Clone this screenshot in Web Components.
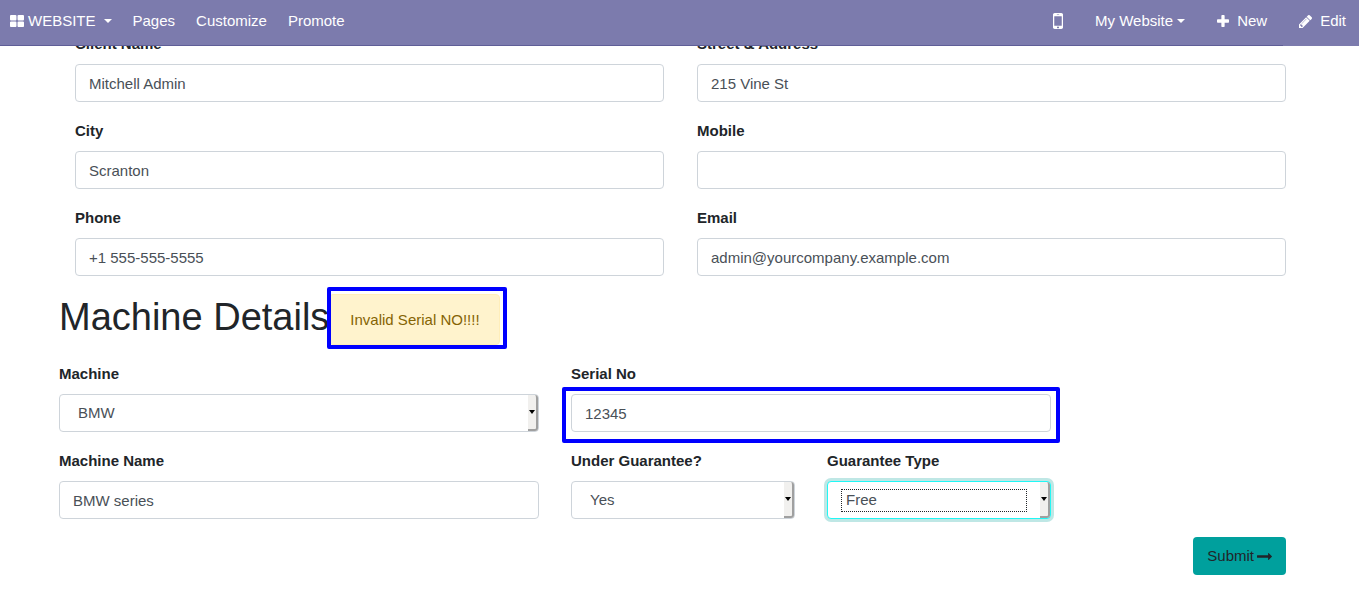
<!DOCTYPE html>
<html lang="en">
<head>
<meta charset="utf-8">
<meta name="viewport" content="width=device-width, initial-scale=1">
<title>Machine Repair Request</title>
<style>
  body { margin: 0; background: #fff; color: #212529; font: 15px/22px "Liberation Sans", Arial, sans-serif; }
</style>
</head>
<body>
<editor-bar></editor-bar>
<repair-form></repair-form>

<script>
const ICONS = {
  grid: ['64 128 1664 1408', 14, 12, 'M832 1024v384q0 52-38 90t-90 38h-512q-52 0-90-38t-38-90v-384q0-52 38-90t90-38h512q52 0 90 38t38 90zm0-768v384q0 52-38 90t-90 38h-512q-52 0-90-38t-38-90v-384q0-52 38-90t90-38h512q52 0 90 38t38 90zm896 768v384q0 52-38 90t-90 38h-512q-52 0-90-38t-38-90v-384q0-52 38-90t90-38h512q52 0 90 38t38 90zm0-768v384q0 52-38 90t-90 38h-512q-52 0-90-38t-38-90v-384q0-52 38-90t90-38h512q52 0 90 38t38 90z'],
  mobile: ['512 256 768 1280', 10, 16, 'M976 1408q0-33-23.5-56.5t-56.5-23.5-56.5 23.5-23.5 56.5 23.5 56.5 56.5 23.5 56.5-23.5 23.5-56.5zm208-160v-704q0-13-9.500-22.500t-22.500-9.500h-512q-13 0-22.500 9.500t-9.500 22.500v704q0 13 9.500 22.500t22.500 9.500h512q13 0 22.500-9.500t9.500-22.500zm-192-848q0-16-16-16h-160q-16 0-16 16t16 16h160q16 0 16-16zm288-16v1024q0 52-38 90t-90 38h-512q-52 0-90-38t-38-90v-1024q0-52 38-90t90-38h512q52 0 90 38t38 90z'],
  plus: ['192 128 1408 1408', 12, 12, 'M1600 736v192q0 40-28 68t-68 28h-416v416q0 40-28 68t-68 28h-192q-40 0-68-28t-28-68v-416h-416q-40 0-68-28t-28-68v-192q0-40 28-68t68-28h416v-416q0-40 28-68t68-28h192q40 0 68 28t28 68v416h416q40 0 68 28t28 68z'],
  pencil: ['128 149 1515 1515', 13, 13, 'M491 1536l91-91-235-235-91 91v107h128v128h107zm523-928q0-22-22-22-10 0-17 7l-542 542q-7 7-7 17 0 22 22 22 10 0 17-7l542-542q7-7 7-17zm-54-192l416 416-832 832h-416v-416zm683 96q0 53-37 90l-166 166-416-416 166-165q36-38 90-38 53 0 91 38l235 234q37 39 37 91z'],
  arrow: ['0 512 1728 768', 15, 7, 'M1728 893q0 14-10 24l-384 354q-16 14-35 6-19-9-19-29v-224h-1248q-14 0-23-9t-9-23v-192q0-14 9-23t23-9h1248v-224q0-21 19-29t35 5l384 350q10 10 10 23z'],
  caret: ['0 0 8 4', 8, 4, 'M0 0h8l-4 4z']
};

class UiIcon extends HTMLElement {
  connectedCallback() {
    const [box, w, h, d] = ICONS[this.getAttribute('name')];
    this.attachShadow({ mode: 'open' }).innerHTML = `
      <style>
        :host { display: inline-flex; flex: none; }
        svg { display: block; fill: currentColor; }
      </style>
      <svg viewBox="${box}" width="${w}" height="${h}" preserveAspectRatio="none" aria-hidden="true"><path d="${d}"/></svg>`;
  }
}
customElements.define('ui-icon', UiIcon);

class EditorBar extends HTMLElement {
  constructor() {
    super();
    this.attachShadow({ mode: 'open' }).innerHTML = `
      <style>
        :host { display: block; position: fixed; inset: 0 0 auto 0; z-index: 10; }
        nav {
          display: flex; justify-content: space-between; align-items: center;
          padding: 10px 13px 14px 10px; color: #fff;
          background: linear-gradient(#5f5e97, #5f5e97) 0 100% / calc(100% - 76px) 1px no-repeat, #7c7bad;
        }
        div { display: flex; align-items: center; gap: 21px; }
        .tools { gap: 32px; }
        a { display: flex; align-items: center; gap: 8px; color: inherit; text-decoration: none; white-space: nowrap; }
        .tight { gap: 4px; }
        span { display: flex; align-items: center; gap: 4px; }
      </style>
      <nav aria-label="Website editor">
        <div>
          <a href="#website"><span><ui-icon name="grid"></ui-icon>WEBSITE</span><ui-icon name="caret"></ui-icon></a>
          <a href="#pages">Pages</a>
          <a href="#customize">Customize</a>
          <a href="#promote">Promote</a>
        </div>
        <div class="tools">
          <a href="#mobile" aria-label="Mobile preview"><ui-icon name="mobile"></ui-icon></a>
          <a href="#sites" class="tight">My Website<ui-icon name="caret"></ui-icon></a>
          <a href="#new"><ui-icon name="plus"></ui-icon>New</a>
          <a href="#edit"><ui-icon name="pencil"></ui-icon>Edit</a>
        </div>
      </nav>`;
  }
}
customElements.define('editor-bar', EditorBar);

/* Labelled control: a text box, or a drop-down when "options" is given. */
class FormField extends HTMLElement {
  connectedCallback() {
    const value = this.getAttribute('value') || '';
    const options = this.getAttribute('options');
    const control = options
      ? `<select id="control">${options.split('|').map(o => `<option${o === value ? ' selected' : ''}>${o}</option>`).join('')}</select>
         <i class="strip"><ui-icon name="caret"></ui-icon></i>`
      : `<input id="control" type="${this.getAttribute('type') || 'text'}" value="${value}">`;
    this.attachShadow({ mode: 'open' }).innerHTML = `
      <style>
        :host { display: block; min-width: 0; }
        label { display: block; width: fit-content; margin-bottom: 9px; font-weight: bold; }
        .box { position: relative; }
        input, select {
          display: block; box-sizing: border-box; width: 100%; height: 38px; margin: 0; padding: 0 13px;
          font: inherit; color: #495057; background: #fff; border: 1px solid #ced4da; border-radius: 4px;
          appearance: none; outline: 0;
        }
        select { padding: 0 24px 0 18px; }
        .strip {
          position: absolute; inset: 1px 1px 1px auto; width: 10px; box-sizing: border-box; pointer-events: none;
          display: flex; align-items: center; justify-content: center; color: #000; background: #f1f0ee;
          border: solid #a0a0a0; border-width: 0 2px 2px 0; border-radius: 0 3px 3px 0;
        }
        .strip ui-icon { width: 6px; overflow: hidden; justify-content: center; }
        :host([active]) select { border-color: #21f7f5; box-shadow: 0 0 0 3px #bfe7e5; }
        :host([active]) .box::after {
          content: ""; position: absolute; inset: 8px 24px 7px 14px; border: 1px dotted #212529; pointer-events: none;
        }
        :host([marked]) .box::before {
          content: ""; position: absolute; inset: -7px -9px -11px; border: 4px solid #00f; border-radius: 2px; pointer-events: none;
        }
      </style>
      <label for="control">${this.getAttribute('label')}</label>
      <div class="box">${control}</div>`;
  }
}
customElements.define('form-field', FormField);

class AlertNote extends HTMLElement {
  constructor() {
    super();
    this.attachShadow({ mode: 'open' }).innerHTML = `
      <style>
        :host {
          display: block; position: relative; padding: 14px 19px 13px 20px; white-space: nowrap;
          color: #856404; background: #fff3cd; border: 1px solid #ffeeba; border-radius: 4px;
        }
        :host::after {
          content: ""; position: absolute; inset: -8px -8px -5px -3px; border: 4px solid #00f; border-radius: 2px; pointer-events: none;
        }
      </style>
      <slot></slot>`;
  }
}
customElements.define('alert-note', AlertNote);

class RepairForm extends HTMLElement {
  constructor() {
    super();
    this.attachShadow({ mode: 'open' }).innerHTML = `
      <style>
        :host { display: block; padding: 33px 52px 18px 59px; }
        form { display: grid; gap: 18px; }
        .client { display: grid; grid-template-columns: 1fr 1fr; gap: 18px 33px; padding: 0 21px 0 16px; }
        .title { display: flex; align-items: flex-start; }
        h1 { margin: 0; font-size: 38px; line-height: 46px; font-weight: normal; white-space: nowrap; }
        .machine { display: grid; grid-template-columns: repeat(5, 1fr); gap: 18px 32px; }
        .wide { grid-column: span 2; }
        .first { grid-column: 1 / span 2; }
        button {
          justify-self: end; display: flex; align-items: center; gap: 3px; height: 38px; margin: 0 21px 0 0; padding: 0 14px;
          font: inherit; color: #212529; background: #00a09d; border: 0; border-radius: 4px;
        }
      </style>
      <form>
        <section class="client">
          <form-field label="Client Name" value="Mitchell Admin"></form-field>
          <form-field label="Street &amp;amp; Address" value="215 Vine St"></form-field>
          <form-field label="City" value="Scranton"></form-field>
          <form-field label="Mobile" type="tel"></form-field>
          <form-field label="Phone" type="tel" value="+1 555-555-5555"></form-field>
          <form-field label="Email" type="email" value="admin@yourcompany.example.com"></form-field>
        </section>
        <div class="title"><h1>Machine Details</h1><alert-note role="alert">Invalid Serial NO!!!!</alert-note></div>
        <section class="machine">
          <form-field class="first" label="Machine" value="BMW" options="BMW"></form-field>
          <form-field class="wide" label="Serial No" value="12345" marked></form-field>
          <form-field class="first" label="Machine Name" value="BMW series"></form-field>
          <form-field label="Under Guarantee?" value="Yes" options="Yes|No"></form-field>
          <form-field label="Guarantee Type" value="Free" options="Free|Paid" active></form-field>
        </section>
        <button type="submit">Submit<ui-icon name="arrow"></ui-icon></button>
      </form>`;
  }
}
customElements.define('repair-form', RepairForm);
</script>
</body>
</html>
